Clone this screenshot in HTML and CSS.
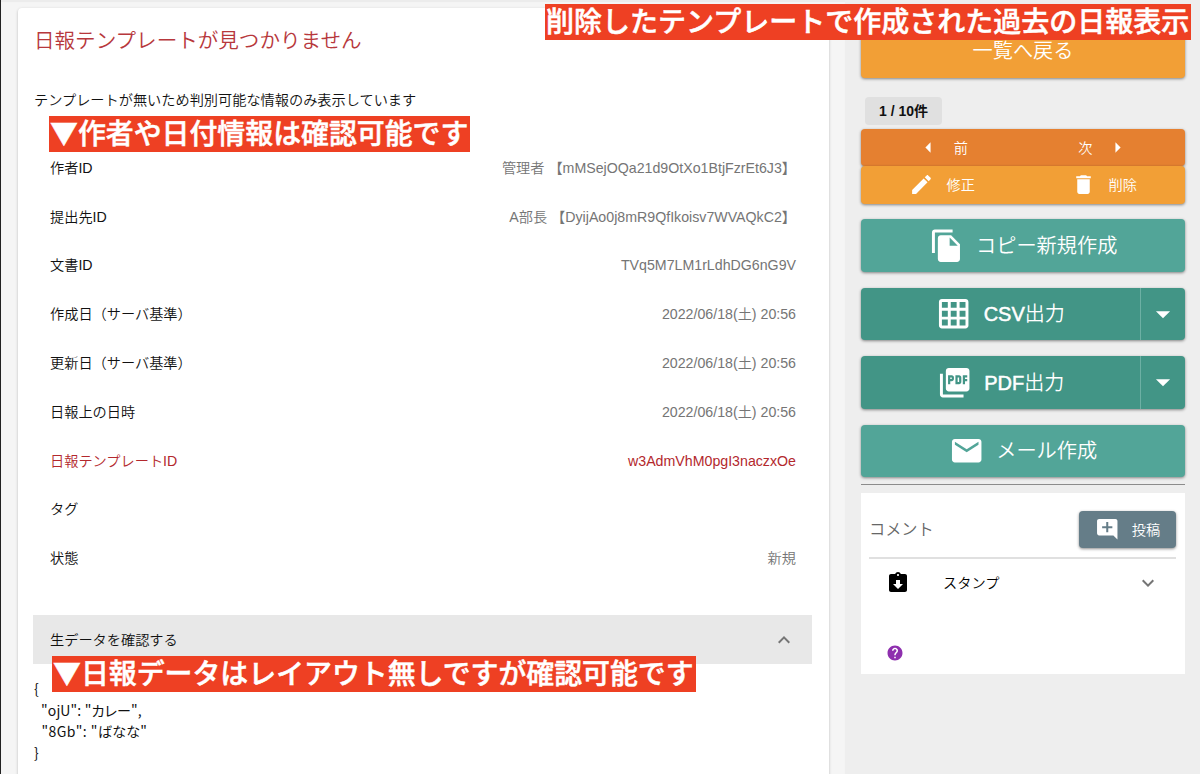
FILE: index.html
```html
<!DOCTYPE html>
<html lang="ja">
<head>
<meta charset="utf-8">
<title>日報</title>
<link rel="stylesheet" href="styles.css">
</head>
<body>
<div class="app">
  <main class="main">
    <section class="card">
      <h1 class="title">日報テンプレートが見つかりません</h1>
      <p class="note">テンプレートが無いため判別可能な情報のみ表示しています</p>
      <dl class="list">
        <div class="row"><dt>作者ID</dt><dd>管理者 【mMSejOQa21d9OtXo1BtjFzrEt6J3】</dd></div>
        <div class="row"><dt>提出先ID</dt><dd>A部長 【DyijAo0j8mR9QfIkoisv7WVAQkC2】</dd></div>
        <div class="row"><dt>文書ID</dt><dd>TVq5M7LM1rLdhDG6nG9V</dd></div>
        <div class="row"><dt>作成日（サーバ基準）</dt><dd>2022/06/18(土) 20:56</dd></div>
        <div class="row"><dt>更新日（サーバ基準）</dt><dd>2022/06/18(土) 20:56</dd></div>
        <div class="row"><dt>日報上の日時</dt><dd>2022/06/18(土) 20:56</dd></div>
        <div class="row error"><dt>日報テンプレートID</dt><dd>w3AdmVhM0pgI3naczxOe</dd></div>
        <div class="row"><dt>タグ</dt><dd></dd></div>
        <div class="row"><dt>状態</dt><dd>新規</dd></div>
      </dl>
      <div class="panel-head">
        <span>生データを確認する</span>
        <svg class="chevron" viewBox="0 0 24 24"><path d="M7.41 15.41L12 10.83l4.59 4.58L18 14l-6-6-6 6z"/></svg>
      </div>
      <pre class="raw">{
  "ojU": "カレー",
<span class="wide">  "8Gb": "ばなな"</span>
}</pre>
    </section>
  </main>
  <aside class="side">
    <button class="btn orange back">一覧へ戻る</button>
    <span class="chip">1 / 10件</span>
    <div class="pair dark-orange">
      <button class="half"><svg viewBox="0 0 24 24"><path d="M14 7l-5 5 5 5V7z"/></svg>前</button>
      <button class="half">次<svg viewBox="0 0 24 24"><path d="M10 17l5-5-5-5v10z"/></svg></button>
    </div>
    <div class="pair orange">
      <button class="half"><svg viewBox="0 0 24 24"><path d="M3 17.25V21h3.75L17.81 9.94l-3.75-3.75L3 17.25zM20.71 7.04c.39-.39.39-1.02 0-1.41l-2.34-2.34c-.39-.39-1.02-.39-1.41 0l-1.83 1.83 3.75 3.75 1.83-1.83z"/></svg>修正</button>
      <button class="half"><svg viewBox="0 0 24 24"><path d="M6 19c0 1.1.9 2 2 2h8c1.1 0 2-.9 2-2V7H6v12zM19 4h-3.5l-1-1h-5l-1 1H5v2h14V4z"/></svg>削除</button>
    </div>
    <button class="btn teal"><svg viewBox="0 0 24 24"><path d="M16 1H4c-1.1 0-2 .9-2 2v14h2V3h12V1zm-1 4l6 6v10c0 1.1-.9 2-2 2H7.99C6.89 23 6 22.1 6 21l.01-14c0-1.1.89-2 1.99-2h7zm-1 7h5.5L14 6.5V12z"/></svg>コピー新規作成</button>
    <div class="split">
      <button class="split-main"><svg viewBox="0 0 24 24"><path d="M20 2H4c-1.1 0-2 .9-2 2v16c0 1.1.9 2 2 2h16c1.1 0 2-.9 2-2V4c0-1.1-.9-2-2-2zM8 20H4v-4h4v4zm0-6H4v-4h4v4zm0-6H4V4h4v4zm6 12h-4v-4h4v4zm0-6h-4v-4h4v4zm0-6h-4V4h4v4zm6 12h-4v-4h4v4zm0-6h-4v-4h4v4zm0-6h-4V4h4v4z"/></svg><span><span class="latin">CSV</span>出力</span></button>
      <button class="split-drop"><svg viewBox="0 0 24 24"><path d="M7 10l5 5 5-5z"/></svg></button>
    </div>
    <div class="split">
      <button class="split-main"><svg viewBox="0 0 24 24"><path d="M20 2H8c-1.1 0-2 .9-2 2v12c0 1.1.9 2 2 2h12c1.1 0 2-.9 2-2V4c0-1.1-.9-2-2-2zm-8.5 7.5c0 .83-.67 1.5-1.5 1.5H9v2H7.5V7H10c.83 0 1.5.67 1.5 1.5v1zm5 2c0 .83-.67 1.5-1.5 1.5h-2.5V7H15c.83 0 1.5.67 1.5 1.5v3zm4-3H19v1h1.5V11H19v2h-1.5V7h3v1.5zM9 9.5h1v-1H9v1zM4 6H2v14c0 1.1.9 2 2 2h14v-2H4V6zm10 5.5h1v-3h-1v3z"/></svg><span><span class="latin">PDF</span>出力</span></button>
      <button class="split-drop"><svg viewBox="0 0 24 24"><path d="M7 10l5 5 5-5z"/></svg></button>
    </div>
    <button class="btn teal"><svg viewBox="0 0 24 24"><path d="M20 4H4c-1.1 0-1.99.9-1.99 2L2 18c0 1.1.9 2 2 2h16c1.1 0 2-.9 2-2V6c0-1.1-.9-2-2-2zm0 4l-8 5-8-5V6l8 5 8-5v2z"/></svg>メール作成</button>
    <hr class="rule">
    <section class="comments">
      <header class="comments-head">
        <span class="comments-title">コメント</span>
        <button class="post"><svg viewBox="0 0 24 24"><path d="M22 4c0-1.1-.9-2-2-2H4c-1.1 0-2 .9-2 2v12c0 1.1.9 2 2 2h14l4 4V4zm-5 7h-4v4h-2v-4H7V9h4V5h2v4h4v2z"/></svg>投稿</button>
      </header>
      <div class="stamp">
        <svg class="stamp-icon" viewBox="0 0 24 24"><path d="M19 3h-4.18C14.4 1.84 13.3 1 12 1s-2.4.84-2.82 2H5c-1.1 0-2 .9-2 2v14c0 1.1.9 2 2 2h14c1.1 0 2-.9 2-2V5c0-1.1-.9-2-2-2zm-7 0c.55 0 1 .45 1 1s-.45 1-1 1-1-.45-1-1 .45-1 1-1zm0 15l-5-5h3V9h4v4h3l-5 5z"/></svg>
        <span class="stamp-label">スタンプ</span>
        <svg class="chevron" viewBox="0 0 24 24"><path d="M7.41 8.59L12 13.17l4.59-4.58L18 10l-6 6-6-6z"/></svg>
      </div>
      <svg class="help" viewBox="0 0 24 24"><path d="M12 2C6.48 2 2 6.48 2 12s4.48 10 10 10 10-4.48 10-10S17.52 2 12 2zm1 17h-2v-2h2v2zm2.07-7.75l-.9.92C13.45 12.9 13 13.5 13 15h-2v-.5c0-1.1.45-2.1 1.17-2.83l1.24-1.26c.37-.36.59-.86.59-1.41 0-1.1-.9-2-2-2s-2 .9-2 2H8c0-2.21 1.79-4 4-4s4 1.79 4 4c0 .88-.36 1.68-.93 2.25z"/></svg>
    </section>
  </aside>
  <div class="banner banner-top">削除したテンプレートで作成された過去の日報表示</div>
  <div class="banner banner-author">▼作者や日付情報は確認可能です</div>
  <div class="banner banner-data">▼日報データはレイアウト無しですが確認可能です</div>
</div>
</body>
</html>
```

FILE: styles.css
```css
* { box-sizing: border-box; }

body {
  margin: 0;
  font-family: "Liberation Sans", "Noto Sans CJK JP", sans-serif;
  font-size: 14.2px;
  font-weight: 350;
  color: #111;
  background: #f5f5f5;
}

button {
  border: 0;
  margin: 0;
  padding: 0;
  background: none;
  color: #fff;
  font: inherit;
}

svg { display: block; flex: none; fill: currentColor; }

.app {
  position: relative;
  display: flex;
  width: 1200px;
  height: 774px;
  overflow: hidden;
  border-left: 1px solid #222;
}

.main { width: 844px; padding: 8px 16px 0 17px; box-shadow: inset 0 2px 1px #ececec; }

.card {
  height: 790px;
  padding: 0 17px 0 16px;
  background: #fff;
  border-radius: 4px 4px 0 0;
  box-shadow: 0 1px 3px rgba(0, 0, 0, .24);
}

.title {
  margin: 0;
  padding-top: 18px;
  font-size: 20.55px;
  font-weight: 350;
  line-height: 30px;
  color: #b7383c;
}

.note { margin: 0; padding-top: 33px; line-height: 22px; }

.list { margin: 0; padding: 32.5px 16px 0; }

.row {
  display: flex;
  justify-content: space-between;
  align-items: center;
  height: 48.8px;
}

.row dt, .row dd { line-height: 22px; }
.row dd { margin: 0; color: #757575; }
.row.error, .row.error dd { color: #b3282d; }

.panel-head {
  display: flex;
  justify-content: space-between;
  align-items: center;
  height: 49px;
  margin: 32.5px 0 0 -1px;
  padding: 0 16px 2px 17px;
  background: #e8e8e8;
}

.panel-head .chevron { margin-top: 2px; }

.chevron { width: 24px; height: 24px; color: #757575; }

.raw {
  margin: 0;
  padding-top: 14px;
  font-family: "Noto Sans CJK JP", sans-serif;
  font-size: 14px;
  font-weight: 400;
  line-height: 21.4px;
  letter-spacing: .1px;
  word-spacing: .3px;
  font-feature-settings: "palt";
}

.wide { letter-spacing: .35px; }

.side {
  display: flex;
  flex-direction: column;
  width: 355px;
  padding: 25px 15px 0 16px;
  background: #eee;
}

.btn, .pair, .split {
  display: flex;
  flex: none;
  border-radius: 4px;
  color: #fff;
  box-shadow: 0 1px 3px rgba(0, 0, 0, .45);
}

.btn {
  justify-content: center;
  align-items: center;
  gap: 12px;
  height: 52.5px;
  margin-bottom: 16px;
  padding-bottom: 2px;
  font-size: 20.2px;
}

.btn svg, .split-main svg { width: 35.4px; height: 35.4px; margin-top: 2px; }

.orange { background: #f29f36; }
.dark-orange { background: #e58030; }
.teal { background: #52a598; }

.back { margin-bottom: 19px; padding-bottom: 4px; }

.chip {
  flex: none;
  width: 77px;
  height: 28px;
  margin: 0 0 4.5px 4px;
  border-radius: 4px;
  background: #e0e0e0;
  font-weight: 700;
  font-size: 14px;
  line-height: 29px;
  text-align: center;
}

.pair { height: 37.3px; }
.pair.orange { margin-bottom: 15.5px; }

.half {
  display: flex;
  flex: 1;
  justify-content: center;
  align-items: center;
  gap: 12.5px;
  padding-bottom: 2px;
}

.half svg { width: 25px; height: 25px; margin-top: 2px; }

.split { height: 52.5px; margin-bottom: 16px; background: #429586; }

.split-main {
  display: flex;
  flex: 1;
  justify-content: center;
  align-items: center;
  gap: 12px;
  padding-bottom: 2px;
  font-size: 20px;
}

.latin { font-weight: 400; -webkit-text-stroke: .5px; }

.split-drop {
  display: flex;
  justify-content: center;
  align-items: center;
  width: 45px;
  border-left: 1px solid #6db0a4;
}

.split-drop svg { width: 34px; height: 34px; }

.rule {
  width: 100%;
  height: 1px;
  margin: -9px 0 8px;
  border: 0;
  background: #8c8c8c;
}

.comments { height: 181px; flex: none; padding: 0 9px 0 8px; background: #fff; }

.comments-head {
  display: flex;
  justify-content: space-between;
  align-items: center;
  height: 66px;
  padding-top: 7px;
  border-bottom: 2px solid #e0e0e0;
}

.comments-title { margin-top: -2px; font-size: 16.2px; color: #666; }

.post {
  display: flex;
  justify-content: center;
  align-items: center;
  gap: 12.5px;
  width: 97px;
  height: 37px;
  margin-top: 2px;
  padding-bottom: 2px;
  border-radius: 4px;
  background: #657d88;
  box-shadow: 0 1px 3px rgba(0, 0, 0, .45);
}

.post svg { width: 24.5px; height: 24.5px; margin-top: 2px; }

.stamp {
  display: flex;
  align-items: center;
  height: 48px;
  padding: 0 16px 2px 17px;
}

.stamp .chevron { margin-top: 2px; }
.stamp-icon { width: 24px; height: 24px; margin-top: 1px; color: #000; }
.stamp-label { flex: 1; padding-left: 33px; color: #000; }

.help { width: 18px; height: 18px; margin: 37px 0 0 16.5px; color: #8e2fae; }

.banner {
  position: absolute;
  height: 36px;
  padding-left: 1px;
  background: #ee4023;
  color: #fff;
  font-family: "Noto Sans CJK JP", sans-serif;
  font-size: 28px;
  font-weight: 500;
  -webkit-text-stroke: .5px;
  line-height: 33px;
  white-space: nowrap;
}

.banner-top { left: 544px; top: 4px; width: 646px; }
.banner-author { left: 48px; top: 116px; width: 421px; font-size: 27.9px; }
.banner-data { left: 51px; top: 656px; width: 644px; font-size: 27.9px; }
```
